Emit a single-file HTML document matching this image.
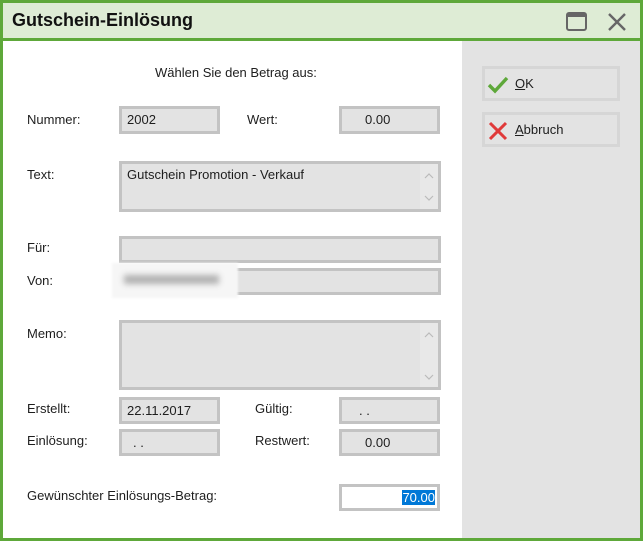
<!DOCTYPE html>
<html><head><meta charset="utf-8"><style>
*{box-sizing:border-box;margin:0;padding:0}
body{width:643px;height:541px;overflow:hidden;background:#fff;font-family:"Liberation Sans","DejaVu Sans",sans-serif;font-size:13px;color:#1e1e1e;position:relative}
.win{position:absolute;left:0;top:0;width:643px;height:541px;border:3px solid #5ea83a;background:#fff}
.title{position:absolute;left:0;top:0;width:637px;height:38px;background:#deecd5;border-bottom:3px solid #5ea83a}
.title span{position:absolute;left:9px;top:7px;font-size:18px;font-weight:bold;color:#111}
.right{position:absolute;left:459px;top:38px;width:178px;height:497px;background:#e3e3e3}
.a{position:absolute}
.f{position:absolute;border:3px solid #c3c3c3;background:#e3e3e3;padding:3px 5px;line-height:16px}
.btn{position:absolute;left:20px;width:138px;height:35px;border:3px solid #d6d6d6;background:#e3e3e3;line-height:29px;padding-left:30px}
</style></head><body>
<div class="win">
<div class="title"><span>Gutschein-Einlösung</span>
<svg class="a" style="left:563px;top:9px" width="22" height="20"><rect x="1" y="1" width="19" height="17" rx="2" fill="none" stroke="#666" stroke-width="2"/><rect x="1" y="1" width="19" height="4" fill="#666"/></svg>
<svg class="a" style="left:604px;top:9px" width="20" height="20"><path d="M2 2L18 18M18 2L2 18" stroke="#666" stroke-width="2.4"/></svg>
</div>
<div class="right">
<div class="btn" style="top:25px"><svg class="a" style="left:2px;top:7px" width="22" height="18"><path d="M2 9L8 15L20 2" fill="none" stroke="#5ea83a" stroke-width="3.4"/></svg><u>O</u>K</div>
<div class="btn" style="top:71px"><svg class="a" style="left:3px;top:6px" width="20" height="20"><path d="M2 2L18 18M18 2L2 18" stroke="#e03a3a" stroke-width="3"/></svg><u>A</u>bbruch</div>
</div>
</div>
<div class="a" style="left:155px;top:65px">Wählen Sie den Betrag aus:</div>
<div class="a" style="left:27px;top:112px">Nummer:</div>
<div class="f" style="left:119px;top:106px;width:101px;height:28px">2002</div>
<div class="a" style="left:247px;top:112px">Wert:</div>
<div class="f" style="left:339px;top:106px;width:101px;height:28px;padding-left:23px">0.00</div>
<div class="a" style="left:27px;top:167px">Text:</div>
<div class="f" style="left:119px;top:161px;width:322px;height:51px">Gutschein Promotion - Verkauf
<svg class="a" style="right:0;top:0;height:45px" width="18" height="45"><rect width="18" height="45" fill="#e8e8e8"/><path d="M5 14L9 10L13 14M5 32L9 36L13 32" fill="none" stroke="#bbb" stroke-width="1.2"/></svg></div>
<div class="a" style="left:27px;top:240px">Für:</div>
<div class="f" style="left:119px;top:236px;width:322px;height:27px"></div>
<div class="a" style="left:27px;top:273px">Von:</div>
<div class="f" style="left:119px;top:268px;width:322px;height:27px"></div>
<div class="a" style="left:112px;top:263px;width:126px;height:35px;background:#f6f6f6;filter:blur(1px)"><div style="position:absolute;left:12px;top:12px;width:95px;height:9px;background:#b0b0b0;filter:blur(3px)"></div></div>
<div class="a" style="left:27px;top:326px">Memo:</div>
<div class="f" style="left:119px;top:320px;width:322px;height:70px"><svg class="a" style="right:0;top:0" width="18" height="64"><rect width="18" height="64" fill="#e8e8e8"/><path d="M5 14L9 10L13 14M5 52L9 56L13 52" fill="none" stroke="#bbb" stroke-width="1.2"/></svg></div>
<div class="a" style="left:27px;top:401px">Erstellt:</div>
<div class="f" style="left:119px;top:397px;width:101px;height:27px">22.11.2017</div>
<div class="a" style="left:255px;top:401px">Gültig:</div>
<div class="f" style="left:339px;top:397px;width:101px;height:27px;padding-left:17px">. .</div>
<div class="a" style="left:27px;top:433px">Einlösung:</div>
<div class="f" style="left:119px;top:429px;width:101px;height:27px;padding-left:11px">. .</div>
<div class="a" style="left:255px;top:433px">Restwert:</div>
<div class="f" style="left:339px;top:429px;width:101px;height:27px;padding-left:23px">0.00</div>
<div class="a" style="left:27px;top:488px">Gewünschter Einlösungs-Betrag:</div>
<div class="f" style="left:339px;top:484px;width:101px;height:27px;background:#fff;padding:3px 2px;text-align:right"><span style="background:#0078d7;color:#fff">70.00</span></div>
</body></html>
